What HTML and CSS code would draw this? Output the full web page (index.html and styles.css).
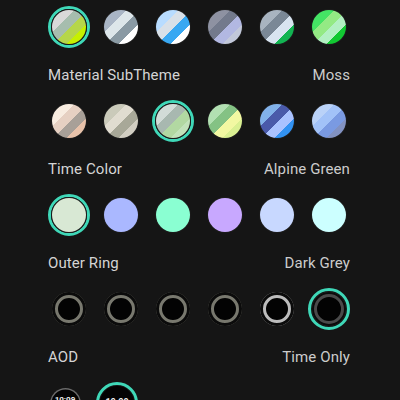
FILE: index.html
```html
<!DOCTYPE html>
<html>
<head>
<meta charset="utf-8">
<link rel="stylesheet" href="styles.css">
</head>
<body>
<div class="page">
  <div class="swatches">
    <div class="cell sel"><div class="dot" style="background:linear-gradient(135deg,#d9d9d9 0 33%,#a6bdae 33% 52%,#b6d64a 52% 72%,#c6f000 72%)"></div></div>
    <div class="cell"><div class="dot" style="background:linear-gradient(135deg,#a9b5c5 0 33%,#dde6ea 33% 52%,#8a9aa4 52% 72%,#ffffff 72%)"></div></div>
    <div class="cell"><div class="dot" style="background:linear-gradient(135deg,#b8dcff 0 33%,#d8e0e8 33% 52%,#38a8f2 52% 72%,#ffffff 72%)"></div></div>
    <div class="cell"><div class="dot" style="background:linear-gradient(135deg,#8e92a2 0 33%,#737a8c 33% 52%,#b2b8e2 52% 72%,#c2c8da 72%)"></div></div>
    <div class="cell"><div class="dot" style="background:linear-gradient(135deg,#a8b4c0 0 33%,#7a8896 33% 52%,#d8e4f0 52% 72%,#12b452 72%)"></div></div>
    <div class="cell"><div class="dot" style="background:linear-gradient(135deg,#44e464 0 33%,#94ea84 33% 52%,#b2f0c2 52% 72%,#12c832 72%)"></div></div>
  </div>
  <div class="label"><span>Material SubTheme</span><span class="value">Moss</span></div>

  <div class="swatches">
    <div class="cell"><div class="dot" style="background:linear-gradient(135deg,#f8ece0 0 33%,#e6d0c2 33% 52%,#a8a098 52% 72%,#e8c2aa 72%)"></div></div>
    <div class="cell"><div class="dot" style="background:linear-gradient(135deg,#cacaba 0 33%,#e0dcd0 33% 52%,#a8a898 52% 72%,#d2cec2 72%)"></div></div>
    <div class="cell sel"><div class="dot" style="background:linear-gradient(135deg,#d2dcd8 0 33%,#a8b8b0 33% 52%,#b2d8a2 52% 72%,#c2e2ba 72%)"></div></div>
    <div class="cell"><div class="dot" style="background:linear-gradient(135deg,#b2e0b2 0 33%,#84c284 33% 52%,#f2f8a2 52% 72%,#daf092 72%)"></div></div>
    <div class="cell"><div class="dot" style="background:linear-gradient(135deg,#82b2ea 0 33%,#4a5aaa 33% 52%,#aac2ff 52% 72%,#3292f2 72%)"></div></div>
    <div class="cell"><div class="dot" style="background:linear-gradient(135deg,#bad2f8 0 33%,#a2c2f8 33% 52%,#7a9ae2 52% 72%,#8292c2 72%)"></div></div>
  </div>
  <div class="label"><span>Time Color</span><span class="value">Alpine Green</span></div>

  <div class="swatches">
    <div class="cell sel"><div class="dot" style="background:#d8e8d4"></div></div>
    <div class="cell"><div class="dot" style="background:#aab8ff"></div></div>
    <div class="cell"><div class="dot" style="background:#8affd2"></div></div>
    <div class="cell"><div class="dot" style="background:#c8a8ff"></div></div>
    <div class="cell"><div class="dot" style="background:#c8d8ff"></div></div>
    <div class="cell"><div class="dot" style="background:#ccffff"></div></div>
  </div>
  <div class="label"><span>Outer Ring</span><span class="value">Dark Grey</span></div>

  <div class="swatches">
    <div class="cell"><div class="dot ring"></div></div>
    <div class="cell"><div class="dot ring"></div></div>
    <div class="cell"><div class="dot ring"></div></div>
    <div class="cell"><div class="dot ring"></div></div>
    <div class="cell"><div class="dot ring light"></div></div>
    <div class="cell sel"><div class="dot ring dark"></div></div>
  </div>
  <div class="label"><span>AOD</span><span class="value">Time Only</span></div>

  <div class="swatches aod">
    <div class="cell"><div class="face small"><span>10:09</span></div></div>
    <div class="cell sel"><div class="face"><span>10:09</span></div></div>
  </div>
</div>
</body>
</html>
```

FILE: styles.css
```css
html, body {
  margin: 0;
  padding: 0;
  background: #151515;
  height: 400px;
  overflow: hidden;
}
.page {
  width: 302px;
  margin-left: 48px;
  padding-top: 6px;
  font-family: Roboto, "Open Sans", sans-serif;
}
.swatches {
  display: flex;
  justify-content: space-between;
  height: 42px;
}
.swatches.aod {
  justify-content: flex-start;
  gap: 10px;
  margin-left: -4px;
}
.cell {
  width: 42px;
  height: 42px;
  box-sizing: border-box;
  border-radius: 50%;
  display: flex;
  align-items: center;
  justify-content: center;
}
.cell.sel {
  border: 3px solid #3fd8b8;
}
.dot {
  width: 34px;
  height: 34px;
  border-radius: 50%;
  box-shadow: 0 0 0 1px #1c1c1c;
}
.dot.ring {
  background: #030303;
  box-shadow: inset 0 0 0 3px #0b0b0b, inset 0 0 0 6px #78786e;
}
.dot.ring.light {
  box-shadow: inset 0 0 0 3px #0b0b0b, inset 0 0 0 6px #bcbcbc;
}
.dot.ring.dark {
  box-shadow: inset 0 0 0 2px #0b0b0b, inset 0 0 0 5px #4a4a4a;
}
.face {
  width: 34px;
  height: 34px;
  box-sizing: border-box;
  border-radius: 50%;
  background: #030303;
  display: flex;
  align-items: flex-start;
  justify-content: center;
  padding-top: 11px;
  color: #f0f0f0;
  font-size: 9px;
  line-height: 10px;
  font-weight: 700;
}
.face.small {
  width: 31px;
  height: 31px;
  padding-top: 7px;
  font-size: 8px;
  box-shadow: inset 0 0 0 1.5px #6a6a6a;
}
.label {
  display: flex;
  justify-content: space-between;
  align-items: center;
  height: 20px;
  margin-top: 17px;
  margin-bottom: 15px;
  font-size: 15px;
  color: #d4d4d4;
  letter-spacing: 0.1px;
}
.label .value {
  color: #cccccc;
}
```
